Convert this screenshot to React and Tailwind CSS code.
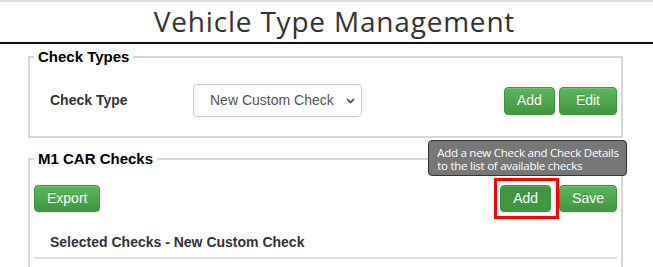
import React from 'react';

const arial = { fontFamily: '"Liberation Sans", Arial, sans-serif' };

function GreenButton({ children, hover, className = '' }) {
  return (
    <button
      type="button"
      className={`rounded-[4px] border border-[#3e8f3e] px-[12px] text-[14px] text-white [text-shadow:0_-1px_0_rgba(0,0,0,0.2)] shadow-[inset_0_1px_0_rgba(255,255,255,0.15),0_1px_1px_rgba(0,0,0,0.075)] ${
        hover ? 'bg-[#419641]' : 'bg-gradient-to-b from-[#5cb85c] to-[#419641]'
      } ${className}`}
      style={arial}
    >
      {children}
    </button>
  );
}

export default function App() {
  return (
    <div className="w-[653px] h-[267px] overflow-hidden bg-white border-t-2 border-[#e0e0e0]">
      <h1
        className="h-[40px] pl-[16px] text-center text-[28px] leading-[38px] tracking-[0.8px] text-[#333]"
        style={{ fontFamily: '"Open Sans", sans-serif' }}
      >
        Vehicle Type Management
      </h1>
      <div className="h-[2px] bg-[#111]" />

      <fieldset className="ml-[28px] mt-[4px] w-[595px] border-2 border-[#d6d6d6]" style={arial}>
        <legend className="ml-[4px] px-[4px] text-[15px] font-bold leading-[18px] text-black">Check Types</legend>
        <div className="flex items-center pl-[20px] pr-[4px] pt-[18px] pb-[19px]">
          <span className="w-[143px] text-[14px] font-bold text-[#333]">Check Type</span>
          <div className="relative">
            <select
              className="h-[33px] w-[169px] appearance-none rounded-[4px] border border-[#ccc] bg-white pl-[16px] pr-[26px] text-[14px] text-[#555]"
              style={arial}
              defaultValue="custom"
            >
              <option value="custom">New Custom Check</option>
            </select>
            <svg className="pointer-events-none absolute right-[7px] top-[14px]" width="9" height="6" viewBox="0 0 9 6">
              <path d="M1 1l3.5 3.5L8 1" fill="none" stroke="#444" strokeWidth="1.6" />
            </svg>
          </div>
          <div className="ml-auto flex gap-[4px]">
            <GreenButton className="h-[28px]">Add</GreenButton>
            <GreenButton className="h-[28px] px-[16px]">Edit</GreenButton>
          </div>
        </div>
      </fieldset>

      <fieldset className="ml-[28px] mt-[12px] w-[595px] border-2 border-[#d6d6d6] pb-[40px]" style={arial}>
        <legend className="ml-[4px] px-[4px] text-[15px] font-bold leading-[18px] text-black">M1 CAR Checks</legend>
        <div className="flex items-center pl-[4px] pr-[4px] pt-[10px]">
          <GreenButton className="h-[27px]">Export</GreenButton>
          <div className="ml-auto flex items-center">
            <span className="relative border-[3px] border-[#f00] pl-[3px] pr-[5px] py-[4px] flex">
              <GreenButton hover className="h-[27px]">Add</GreenButton>
              <div
                className="absolute left-[-69px] bottom-[calc(100%+5px)] w-[199px] whitespace-nowrap rounded-[4px] border border-[#333] bg-[#777] px-[8px] pt-[5px] pb-[3px] text-[11.5px] leading-[13px] tracking-[-0.25px] text-white"
                style={{ fontFamily: '"Open Sans", sans-serif' }}
              >
                Add a new Check and Check Details
                <br />
                to the list of available checks
              </div>
            </span>
            <GreenButton className="h-[27px]">Save</GreenButton>
          </div>
        </div>
        <div className="pl-[20px] pt-[15px] text-[14px] font-bold leading-[16px] text-[#333]">
          Selected Checks - New Custom Check
        </div>
        <div className="mx-[4px] mt-[7px] h-[2px] bg-[#ddd]" />
      </fieldset>
    </div>
  );
}
